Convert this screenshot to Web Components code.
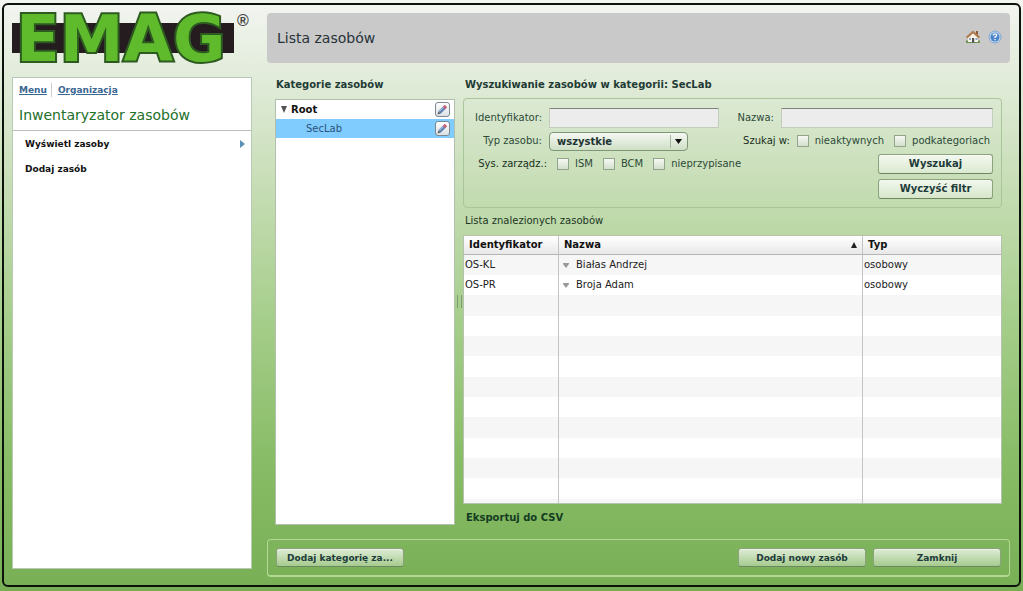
<!DOCTYPE html>
<html lang="pl">
<head>
<meta charset="utf-8">
<title>Lista zasobów</title>
<style>
html, body { margin: 0; height: 100%; }
body {
  font: 10px/14px "DejaVu Sans", Verdana, sans-serif;
  color: #2c4a38;
  background: linear-gradient(#f3f5f1 0%, #e0ebd8 14%, #c4dcb2 33%, #a6ce8b 54%, #88bc66 78%, #78af55 100%);
}
</style>
</head>
<body>
<asset-app></asset-app>
<script>
const define = (name, css, html) => {
  const t = document.createElement('template');
  t.innerHTML = `<style>:host,*{box-sizing:border-box}${css}</style>${html}`;
  customElements.define(name, class extends HTMLElement {
    constructor() {
      super();
      this.attachShadow({ mode: 'open' }).append(t.content.cloneNode(true));
    }
  });
};

define('brand-logo', `
  :host { display: block; height: 52px; }
  svg { display: block; width: 240px; height: 52px; overflow: visible; }
  .word { font: bold 64px "DejaVu Sans", Verdana, sans-serif; fill: #5fba2c; stroke: #2c5a20; stroke-width: 4px; paint-order: stroke; }
  .reg { font: bold 16px "Liberation Sans", Arial, sans-serif; fill: #444; }
`, `
  <svg viewBox="0 0 240 52">
    <path fill="#241c1e" d="M0 10h222v30H0z"/>
    <text class="word" x="4" y="48">EMAG</text>
    <text class="reg" x="225" y="13">®</text>
  </svg>
`);

define('side-menu', `
  :host { display: block; background: #fff; border: 1px solid #b9c7b3; }
  .links { display: flex; align-items: center; height: 23px; padding: 0 6px; font-size: 9px; font-weight: bold; }
  .links a { color: #3b6793; }
  .links a + a { margin-left: 4px; padding-left: 6px; border-left: 1px solid #ccc; }
  h1 { margin: 0; height: 30px; padding: 0 6px; font: 14px/28px "DejaVu Sans", Verdana, sans-serif; color: #23702a; border-bottom: 1px solid #b8c0b8; }
  nav a { display: flex; justify-content: space-between; align-items: center; height: 25px; padding: 0 6px 0 12px; color: #111; font-size: 9px; font-weight: bold; text-decoration: none; }
  svg { width: 5px; height: 8px; }
`, `
  <div class="links"><a href="#menu">Menu</a><a href="#org">Organizacja</a></div>
  <h1>Inwentaryzator zasobów</h1>
  <nav>
    <a href="#list">Wyświetl zasoby<svg viewBox="0 0 5 8"><path fill="#5b92b8" d="M0 0l5 4-5 4z"/></svg></a>
    <a href="#add">Dodaj zasób</a>
  </nav>
`);

define('page-header', `
  :host { display: flex; align-items: center; justify-content: space-between; height: 50px; padding: 0 8px 0 10px; background: #c9c9c9; border-radius: 4px; }
  h2 { margin: 0; font-size: 14px; font-weight: normal; color: #263238; }
  .tools { display: flex; gap: 8px; padding-bottom: 3px; }
  a, svg { display: block; }
`, `
  <h2>Lista zasobów</h2>
  <div class="tools">
    <a href="#home" aria-label="Start"><svg width="14" height="14" viewBox="0 0 14 14">
      <path fill="#6f9150" d="M0 10.500h14V13H0z"/><path fill="#f7f3ec" d="M2 6.500L7 2l5 4.500V12H2z"/>
      <path fill="#8b5a38" d="M10 1h2v4h-2z"/><path fill="none" stroke="#b07c50" stroke-width="2.200" d="M.700 7.700L7 2l6.300 5.700"/>
      <path fill="#4c5258" d="M6 8h2.200v4.500H6z"/><path fill="#8fa6bb" d="M3 8h2v2H3zM9.500 8h2v2h-2z"/></svg></a>
    <a href="#help" aria-label="Pomoc"><svg width="14" height="14" viewBox="0 0 14 14">
      <circle cx="7" cy="7" r="6" fill="#c4d6ea" stroke="#7fa8d4"/><circle cx="7" cy="7" r="4.500" fill="#4a86c9"/>
      <path fill="none" stroke="#fff" stroke-width="1.300" d="M5.300 5.500q0-1.700 1.700-1.700t1.700 1.300-1.700 1.800v1M7 9v1.300"/></svg></a>
  </div>
`);

define('push-button', `
  :host { display: block; height: 20px; }
  button { display: block; width: 100%; height: 100%; padding: 0; font: bold 1em/14px "DejaVu Sans", Verdana, sans-serif; color: #1d3b3a;
    border: 1px solid #8aa37c; border-bottom-color: #6d8860; border-radius: 3px;
    background: linear-gradient(rgba(255,255,255,.75), rgba(255,255,255,.32)); box-shadow: inset 0 1px rgba(255,255,255,.4); }
`, `<button type="button"><slot></slot></button>`);

define('check-option', `
  :host { display: block; }
  label { display: flex; align-items: center; gap: 6px; }
  input { appearance: none; margin: 0; width: 12px; height: 12px; border: 1px solid #93a58a; background: linear-gradient(#f6f8f4, #d3dfcc); }
`, `<label><input type="checkbox"><span><slot></slot></span></label>`);

define('edit-button', `
  :host { display: block; }
  button { display: block; width: 15px; height: 15px; padding: 0; border: 1px solid #7d8890; border-radius: 3px; background: linear-gradient(#fff, #dce0e4); }
  svg { display: block; }
`, `<button type="button" aria-label="Edytuj"><svg width="13" height="13" viewBox="0 0 13 13">
  <path stroke="#5f84b3" stroke-width="3.400" d="M3.500 9.500l5-5"/><path stroke="#bccfe6" d="M3.200 8.600l5-5"/>
  <path stroke="#c9607a" stroke-width="3.400" d="M8 5l2-2"/><path fill="#555" d="M1.500 11.500l1-3 2 2z"/></svg></button>`);

define('category-tree', `
  :host { display: flex; flex-direction: column; }
  h3 { margin: 0; padding-left: 1px; height: 22px; font-size: 10px; line-height: 15px; color: #1f3b35; }
  ul { flex: 1; margin: 0; padding: 0; list-style: none; background: #fff; border: 1px solid #b2bfae; }
  li { display: flex; align-items: center; height: 19px; padding: 0 4px 0 5px; }
  li span { flex: 1; }
  .root { color: #111; font-weight: bold; gap: 4px; }
  .sel { padding-left: 30px; background: #80ccff; color: #2b5278; }
`, `
  <h3>Kategorie zasobów</h3>
  <ul>
    <li class="root"><svg width="6" height="7" viewBox="0 0 6 7"><path fill="#555" d="M0 0h6L3 7z"/></svg><span>Root</span><edit-button></edit-button></li>
    <li class="sel"><span>SecLab</span><edit-button></edit-button></li>
  </ul>
`);

define('search-form', `
  :host { display: block; }
  h3 { margin: 0; padding-left: 2px; height: 21px; font-size: 10px; line-height: 15px; color: #1f3b35; }
  form { display: grid; grid-template-columns: minmax(0, 1fr) auto; align-content: start; row-gap: 3px; height: 110px; padding: 9px 8px 0; border: 1px solid #a9c59a; border-radius: 4px; }
  .row { display: flex; align-items: center; height: 20px; white-space: nowrap; }
  .row > * { flex-shrink: 0; }
  .lab { width: 70px; margin-right: 7px; text-align: right; }
  .sys { width: 75px; text-align: right; }
  .dark { color: #18301c; }
  input { width: 170px; height: 20px; margin: 0; border: 1px solid #c3cdbd; border-top-color: #7d867b; background: #ececec; }
  .name { width: 212px; margin-left: 7px; }
  .right { justify-content: flex-end; }
  .combo { position: relative; width: 139px; }
  select { appearance: none; display: block; width: 100%; height: 19px; padding: 0 7px; font: bold 10px/15px "DejaVu Sans", Verdana, sans-serif; color: #1d3434; border: 1px solid #7e9774; border-radius: 4px; background: linear-gradient(#f5f8f3, #cfdfc5); }
  .combo svg { position: absolute; right: 0; top: 0; pointer-events: none; }
  check-option { margin-left: 10px; }
  .right check-option { margin-right: 3px; margin-left: 7px; }
  .btns { display: grid; justify-content: end; row-gap: 5px; }
  push-button { width: 115px; }
`, `
  <h3>Wyszukiwanie zasobów w kategorii: SecLab</h3>
  <form>
    <div class="row"><label class="lab" for="ident">Identyfikator:</label><input id="ident" type="text"></div>
    <div class="row right"><label for="nm">Nazwa:</label><input class="name" id="nm" type="text"></div>
    <div class="row"><label class="lab" for="kind">Typ zasobu:</label><div class="combo"><select id="kind"><option>wszystkie</option></select>
      <svg width="18" height="19" viewBox="0 0 18 19"><path stroke="#a7b8a0" d="M.5 3v13"/><path fill="#111" d="M5 7h7l-3.500 5z"/></svg></div></div>
    <div class="row right"><span class="dark">Szukaj w:</span><check-option>nieaktywnych</check-option><check-option>podkategoriach</check-option></div>
    <div class="row"><span class="sys dark">Sys. zarządz.:</span><check-option>ISM</check-option><check-option>BCM</check-option><check-option>nieprzypisane</check-option></div>
    <div class="btns"><push-button>Wyszukaj</push-button><push-button>Wyczyść filtr</push-button></div>
  </form>
`);

define('result-table', `
  :host { display: flex; flex-direction: column; min-height: 0; color: #222; }
  .box { flex: 1 1 0; min-height: 0; overflow: hidden; border: 1px solid #b4c2ae; background: #fff; }
  table { width: 100%; border-collapse: separate; border-spacing: 0; table-layout: fixed; }
  th, td { height: 20px; padding: 0 1px; text-align: left; }
  th { height: 19px; padding: 0 5px; color: #111; background: linear-gradient(#fff, #e8e8e8); border-bottom: 1px solid #b5b5b5; }
  th + th, td + td { border-left: 1px solid #c4c4c4; }
  tbody tr:nth-child(odd) { background: #f6f6f6; }
  tbody tr:nth-child(3n) td { height: 21px; }
  .h { display: flex; justify-content: space-between; align-items: center; }
  .n { display: flex; align-items: center; gap: 7px; padding-left: 3px; }
`, `
  <div class="box"><table>
    <colgroup><col style="width:94px"><col><col style="width:139px"></colgroup>
    <thead><tr><th>Identyfikator</th><th><div class="h">Nazwa<svg width="6" height="6" viewBox="0 0 6 6"><path fill="#222" d="M3 0l3 6H0z"/></svg></div></th><th>Typ</th></tr></thead>
    <tbody>
      <tr><td>OS-KL</td><td><div class="n"><svg width="6" height="5" viewBox="0 0 6 5"><path fill="#999" d="M0 0h6v1L3 5 0 1z"/></svg>Białas Andrzej</div></td><td>osobowy</td></tr>
      <tr><td>OS-PR</td><td><div class="n"><svg width="6" height="5" viewBox="0 0 6 5"><path fill="#999" d="M0 0h6v1L3 5 0 1z"/></svg>Broja Adam</div></td><td>osobowy</td></tr>
      ${'<tr><td></td><td></td><td></td></tr>'.repeat(11)}
    </tbody>
  </table></div>
`);

define('action-bar', `
  :host { display: flex; align-items: center; gap: 7px; height: 38px; padding: 0 8px; border: 1px solid #b2da92; border-bottom-width: 2px; border-radius: 4px; }
  push-button { width: 128px; height: 19px; font-size: 9px; }
  .first { margin-right: auto; }
`, `
  <push-button class="first">Dodaj kategorię za...</push-button>
  <push-button>Dodaj nowy zasób</push-button>
  <push-button>Zamknij</push-button>
`);

define('asset-app', `
  :host { display: block; height: 100vh; padding: 3px 2px 4px; }
  .frame { height: 100%; display: grid; grid-template-columns: 240px minmax(0, 1fr); column-gap: 15px; padding: 8px 9px 8px 8px; border: 2px solid #0c120c; border-radius: 6px; }
  .left, .main { display: flex; flex-direction: column; min-height: 0; }
  side-menu { flex: 1; margin: 12px 0 8px; }
  .work { flex: 1; display: grid; grid-template-columns: 180px minmax(0, 1fr); column-gap: 8px; min-height: 0; padding: 14px 8px; }
  .find { display: flex; flex-direction: column; min-height: 0; position: relative; }
  .cap { height: 27px; padding: 6px 2px 0; color: #20361f; }
  result-table { flex: 1; }
  .csv { height: 21px; padding: 7px 3px 0; font-weight: bold; color: #153c22; text-decoration: none; }
  .grip { position: absolute; left: -6px; top: calc(50% - 6px); width: 5px; height: 13px; border: solid #7f9b72; border-width: 0 1px; }
`, `
  <div class="frame">
    <div class="left"><brand-logo></brand-logo><side-menu></side-menu></div>
    <div class="main">
      <page-header></page-header>
      <div class="work">
        <category-tree></category-tree>
        <div class="find">
          <search-form></search-form>
          <div class="cap">Lista znalezionych zasobów</div>
          <result-table></result-table>
          <a class="csv" href="#csv">Eksportuj do CSV</a>
          <div class="grip"></div>
        </div>
      </div>
      <action-bar></action-bar>
    </div>
  </div>
`);
</script>
</body>
</html>
